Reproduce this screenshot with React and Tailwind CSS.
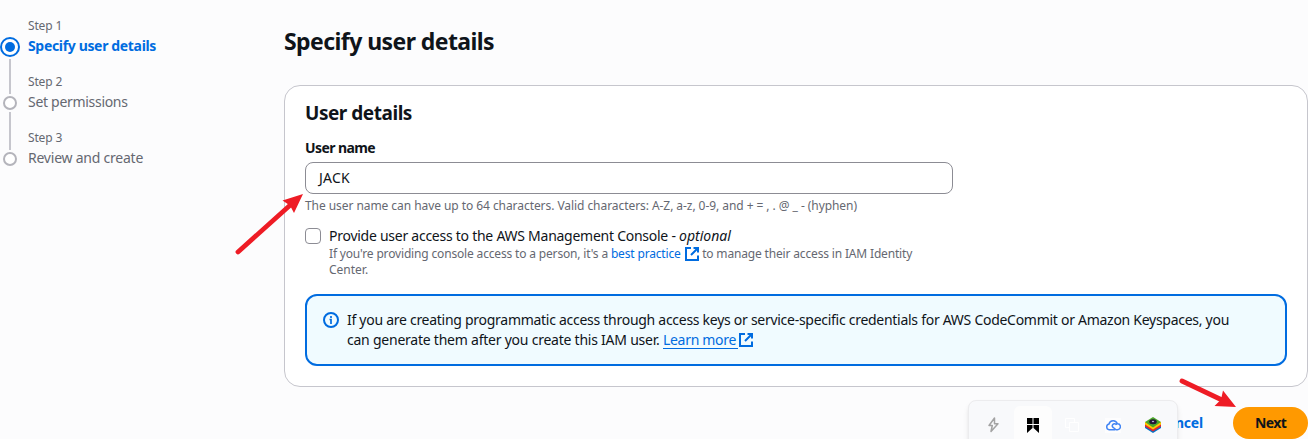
function External() {
  return (
    <svg width="16" height="16" viewBox="0 0 16 16" fill="none" stroke="#006ce0" strokeWidth="2" className="shrink-0">
      <path d="M7 2H2v12h12V9.5" />
      <path d="M9.5 2H14v4.5M14 2 7 9" />
    </svg>
  );
}

function Dot() {
  return <div className="mt-0.5 size-3.5 shrink-0 rounded-full border-2 border-[#b4b4bb] bg-white" />;
}

function Step({ n, children }) {
  return (
    <li className="flex h-14 flex-col gap-0.5">
      <span className="text-xs leading-4 tracking-[-0.15px]">Step {n}</span>
      {children}
    </li>
  );
}

function Steps() {
  return (
    <nav className="flex w-[284px] shrink-0 gap-2 text-[#656871]">
      <div className="flex w-5 flex-col items-center pt-[37px]">
        <div className="flex size-5 shrink-0 items-center justify-center rounded-full border-2 border-[#006ce0] bg-white">
          <div className="size-2.5 rounded-full bg-[#006ce0]" />
        </div>
        <div className="mt-0.5 h-[35px] w-0.5 shrink-0 bg-[#c6c6cd]" />
        <Dot />
        <div className="mt-0.5 h-[38px] w-0.5 shrink-0 bg-[#c6c6cd]" />
        <Dot />
      </div>
      <ol className="pt-[18px] text-sm leading-5">
        <Step n={1}>
          <span className="font-bold tracking-[-0.34px] text-[#006ce0]">Specify user details</span>
        </Step>
        <Step n={2}>
          <span className="tracking-[-0.3px]">Set permissions</span>
        </Step>
        <Step n={3}>
          <span className="tracking-[-0.23px]">Review and create</span>
        </Step>
      </ol>
    </nav>
  );
}

function InfoAlert() {
  return (
    <div className="mt-4 flex h-[72px] gap-2 rounded-xl border-2 border-[#006ce0] bg-[#f0fbff] px-4 py-3.5">
      <svg width="16" height="16" viewBox="0 0 16 16" fill="none" stroke="#006ce0" strokeWidth="2" className="mt-0.5 shrink-0">
        <circle cx="8" cy="8" r="7" />
        <path d="M8 12V7.500H6.500M8 4v2" strokeWidth="1.700" />
      </svg>
      <div className="text-sm leading-5 whitespace-nowrap">
        <p className="tracking-[-0.277px]">
          If you are creating programmatic access through access keys or service-specific credentials for AWS CodeCommit or Amazon Keyspaces, you
        </p>
        <p className="flex">
          <span className="whitespace-pre tracking-[-0.232px]">can generate them after you create this IAM user. </span>
          <a className="flex h-5 text-[#006ce0]">
            <span className="h-[19px] w-[75px] border-b border-[#006ce0] tracking-[-0.31px]">Learn more</span>
            <span className="pt-0.5">
              <External />
            </span>
          </a>
        </p>
      </div>
    </div>
  );
}

function UserDetails() {
  return (
    <section className="h-[302px] rounded-2xl border border-[#c6c6cd] bg-white px-5 pt-[15px]">
      <h2 className="text-[19px] leading-6 font-bold tracking-[-0.47px]">User details</h2>
      <div className="mt-[13px] text-sm leading-5 font-bold tracking-[-0.58px]">User name</div>
      <div className="mt-1 flex h-8 w-[648px] items-center rounded-lg border border-[#8c8c94] px-[13px] text-sm tracking-[0.2px]">JACK</div>
      <p className="mt-1 text-xs leading-4 tracking-[-0.062px] whitespace-nowrap text-[#656871]">
        The user name can have up to 64 characters. Valid characters: A-Z, a-z, 0-9, and + = , . @ _ - (hyphen)
      </p>
      <div className="mt-3 flex gap-2">
        <div className="mt-0.5 size-4 shrink-0 rounded border border-[#8c8c94] bg-white" />
        <div className="whitespace-nowrap">
          <div className="text-sm leading-5 tracking-[-0.258px]">
            Provide user access to the AWS Management Console - <em className="tracking-normal">optional</em>
          </div>
          <div className="flex h-4 text-xs leading-4 tracking-[-0.165px] text-[#656871]">
            <span className="whitespace-pre">If you're providing console access to a person, it's a </span>
            <span className="text-[#006ce0]">best practice</span>
            <span className="mr-0.5 ml-[3.5px]">
              <External />
            </span>
            <span>to manage their access in IAM Identity</span>
          </div>
          <div className="text-xs leading-4 tracking-normal text-[#656871]">Center.</div>
        </div>
      </div>
      <InfoAlert />
    </section>
  );
}

function Toolbar() {
  return (
    <div className="absolute top-[400px] left-[968px] flex h-12 w-[210px] rounded-lg border border-[#ececee] bg-[#f8f9fb] pt-[5px] pl-[45px] shadow-md">
      <div className="-ml-10 flex h-11 w-10 justify-center pt-2.5">
        <svg width="16" height="18" viewBox="0 0 16 18" fill="none" stroke="#a3a3a3" strokeWidth="1.5" strokeLinejoin="round">
          <path d="M8.500 2 3 9.500h3.300L5 15.500 12 7.800H8.500Z" />
        </svg>
      </div>
      <div className="flex h-11 w-[38px] justify-center rounded-md bg-[#fdfdfd] pt-3">
        <svg width="12" height="15" viewBox="0 0 12 15" fill="#000">
          <path d="M0 0h5.500v6H0zM6.500 0H12v6H6.500zM0 7h5.500v3L0 15zM6.500 7H12v8L6.500 10z" />
        </svg>
      </div>
      <div className="flex h-11 w-10 justify-center pt-3">
        <svg width="14" height="14" viewBox="0 0 14 14" fill="none" stroke="#fff">
          <path d="M4.500 4.500h9v9h-9zM4 9.500H.5v-9h9V4" />
        </svg>
      </div>
      <div className="flex h-11 w-[42px] justify-center pt-3">
        <svg width="16" height="15" viewBox="0 0 16 15" fill="none" stroke="#4285f4" strokeWidth="1.5" className="bg-[#fdfdfe]">
          <path d="M10 11.700H4.200A2.900 2.900 0 0 1 4 6a4.300 4.300 0 0 1 8.300-.3 3 3 0 0 1 .2 6H11L7.500 8.700M11.500 7A2.200 2.200 0 1 0 9 10" />
        </svg>
      </div>
      <div className="flex h-11 w-[38px] justify-center pt-[11px]">
        <svg width="16" height="17" viewBox="0 0 16 17">
          <path d="M0 11l8 5 8-5V8H0z" fill="#0074c8" />
          <path d="M0 9.500 8 14.500l8-5V7H0z" fill="#e6262d" />
          <path d="M0 7.500 8 12.500l8-5V5H0z" fill="#ffc800" />
          <path d="M0 5 8 0l8 5-8 5.500z" fill="#4ba62a" />
          <ellipse cx="8" cy="4.800" rx="3.800" ry="2.500" fill="#211a35" />
          <ellipse cx="8" cy="4.500" rx="1.200" ry=".8" fill="#b9a2d8" />
        </svg>
      </div>
    </div>
  );
}

function Arrows() {
  return (
    <svg width="1308" height="439" viewBox="0 0 1308 439" className="pointer-events-none absolute inset-0" fill="#ee1c25" stroke="#ee1c25">
      <path d="M238 252 292 203.500" strokeWidth="4.800" strokeLinecap="round" />
      <path d="M303 194 294 213 290 205.500 282.500 200.500Z" stroke="none" />
      <path d="M1182 381 1222 400" strokeWidth="4.800" strokeLinecap="round" />
      <path d="M1236 407 1214.500 406 1221 399.500 1223 390.500Z" stroke="none" />
    </svg>
  );
}

export default function App() {
  return (
    <div className="relative flex h-[439px] w-[1308px] overflow-hidden bg-[#fcfcfd] font-['Noto_Sans',sans-serif] text-[#0f141a]">
      <Steps />
      <main className="w-[1024px]">
        <h1 className="pt-[26px] pb-[29px] text-[23px] leading-[30px] font-bold tracking-[-0.57px]">Specify user details</h1>
        <UserDetails />
        <div className="mt-5 flex items-center justify-end gap-[30px] text-sm font-bold">
          <a className="tracking-[-0.2px] text-[#006ce0]">Cancel</a>
          <button className="h-8 w-[75px] rounded-full bg-[#ff9900] tracking-[-0.6px]">Next</button>
        </div>
      </main>
      <Toolbar />
      <Arrows />
    </div>
  );
}
